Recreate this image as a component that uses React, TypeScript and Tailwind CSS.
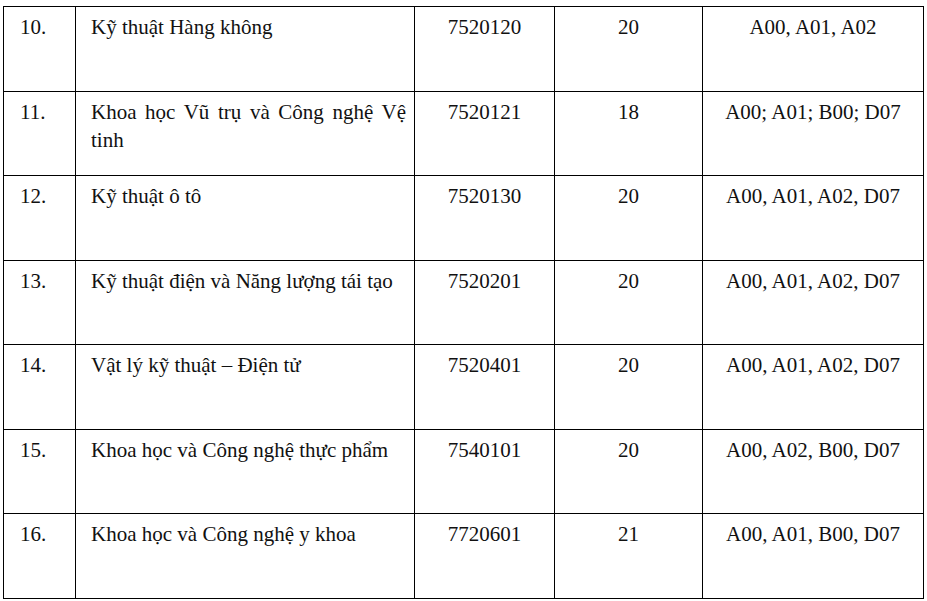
const rows = [
  { no: '10.', name: 'Kỹ thuật Hàng không', code: '7520120', quota: '20', groups: 'A00, A01, A02' },
  { no: '11.', name: 'Khoa học Vũ trụ và Công nghệ Vệ tinh', code: '7520121', quota: '18', groups: 'A00; A01; B00; D07' },
  { no: '12.', name: 'Kỹ thuật ô tô', code: '7520130', quota: '20', groups: 'A00, A01, A02, D07' },
  { no: '13.', name: 'Kỹ thuật điện và Năng lượng tái tạo', code: '7520201', quota: '20', groups: 'A00, A01, A02, D07' },
  { no: '14.', name: 'Vật lý kỹ thuật – Điện tử', code: '7520401', quota: '20', groups: 'A00, A01, A02, D07' },
  { no: '15.', name: 'Khoa học và Công nghệ thực phẩm', code: '7540101', quota: '20', groups: 'A00, A02, B00, D07' },
  { no: '16.', name: 'Khoa học và Công nghệ y khoa', code: '7720601', quota: '21', groups: 'A00, A01, B00, D07' },
];

export default function App() {
  return (
    <div className="w-[927px] h-[601px] overflow-hidden bg-white pl-[3px] pt-[6px] text-[21px] leading-[28px] text-[#111]" style={{ fontFamily: '"Liberation Serif", "Times New Roman", serif' }}>
      <table className="table-fixed border-collapse w-[920px]">
        <colgroup>
          <col className="w-[72px]" />
          <col className="w-[339px]" />
          <col className="w-[140px]" />
          <col className="w-[148px]" />
          <col className="w-[221px]" />
        </colgroup>
        <tbody>
          {rows.map((r) => (
            <tr key={r.no} className="h-[84.5px]">
              <td className="border border-black align-top pt-[6px] pl-[16px]">{r.no}</td>
              <td className="border border-black align-top pt-[6px] pl-[15px] pr-[8px] text-justify">{r.name}</td>
              <td className="border border-black align-top pt-[6px] text-center">{r.code}</td>
              <td className="border border-black align-top pt-[6px] text-center">{r.quota}</td>
              <td className="border border-black align-top pt-[6px] text-center">{r.groups}</td>
            </tr>
          ))}
        </tbody>
      </table>
    </div>
  );
}
